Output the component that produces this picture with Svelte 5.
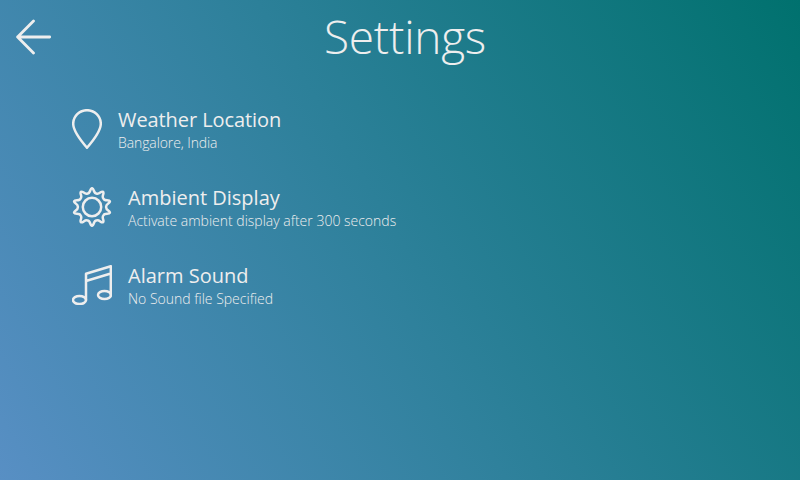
<script>
  const items = [
    { icon: 'pin', title: 'Weather Location', detail: 'Bangalore, India' },
    { icon: 'gear', title: 'Ambient Display', detail: 'Activate ambient display after 300 seconds' },
    { icon: 'music', title: 'Alarm Sound', detail: 'No Sound file Specified' }
  ];
  // Ten soft, wavy teeth around the gear's ring.
  const gear = (() => {
    let d = '';
    const p = (r, a) => `${(20 + r * Math.sin(a)).toFixed(2)} ${(20 - r * Math.cos(a)).toFixed(2)}`;
    const step = Math.PI / 5;
    for (let i = 0; i < 10; i++) {
      const a = i * step;
      if (!i) d += `M${p(18.8, a)}`;
      d += `C${p(18.8, a + 0.12)} ${p(13.8, a + 0.09)} ${p(14.2, a + step / 2)}`;
      d += `C${p(13.8, a + step - 0.09)} ${p(18.8, a + step - 0.12)} ${p(18.8, a + step)}`;
    }
    return d + 'Z';
  })();
</script>

<main>
  <header>
    <button aria-label="Back"><svg width="36" height="36" viewBox="0 0 36 36"><path class="back" d="M17.5 2L1.6 18L17.5 34M1.6 18H33.7" /></svg></button>
    <h1>Settings</h1>
  </header>
  <ul>
    {#each items as item}
      <li>
        {#if item.icon === 'pin'}
          <svg width="30" height="40" viewBox="0 0 30 40"><path d="M15 38.8C13 36.5 1.2 22.5 1.2 14.8A13.8 13.6 0 0 1 28.8 14.8C28.8 22.5 17 36.5 15 38.8Z" /></svg>
        {:else if item.icon === 'gear'}
          <svg width="40" height="40" viewBox="0 0 40 40"><path d={gear} /><circle cx="20" cy="20" r="9.2" /></svg>
        {:else}
          <svg width="40" height="40" viewBox="0 0 40 40"><ellipse cx="7.5" cy="35" rx="6.5" ry="4" /><ellipse cx="32.5" cy="30" rx="6.5" ry="4" /><path d="M14 35V8.8L38.8 1.2V30M14 16L38.8 8.5" /></svg>
        {/if}
        <div><h2 class={item.icon}>{item.title}</h2><p class={item.icon}>{item.detail}</p></div>
      </li>
    {/each}
  </ul>
</main>

<style>
  :global(body) { margin: 0; }
  main {
    width: 800px; height: 480px; overflow: hidden; color: #eee;
    font-family: "Open Sans", sans-serif;
    background: linear-gradient(59.04deg, #588fc4, #00716e);
  }
  header { display: flex; height: 74px; align-items: center; }
  button { width: 52px; padding: 0 0 0 16px; border: 0; background: none; color: inherit; display: flex; }
  h1 { margin: 0 0 2px 272px; font-size: 46px; line-height: 72px; font-weight: 300; letter-spacing: -0.25px; }
  ul { list-style: none; margin: 0; padding: 35px 0 0 72px; display: flex; flex-direction: column; gap: 38px; }
  li { display: flex; gap: 16px; height: 40px; }
  svg { display: block; flex: none; fill: none; stroke: #eee; stroke-width: 2.5; stroke-linejoin: round; stroke-linecap: round; }
  .back { stroke-width: 2.8; stroke-linecap: round; }
  h2 { margin: -3px 0 0; font-size: 20px; line-height: 27px; font-weight: 400; }
  h2.pin { letter-spacing: -0.08px; }
  p { margin: 0; font-size: 14px; line-height: 19px; font-weight: 300; color: #eee; }
  p.pin { letter-spacing: -0.1px; }
</style>
